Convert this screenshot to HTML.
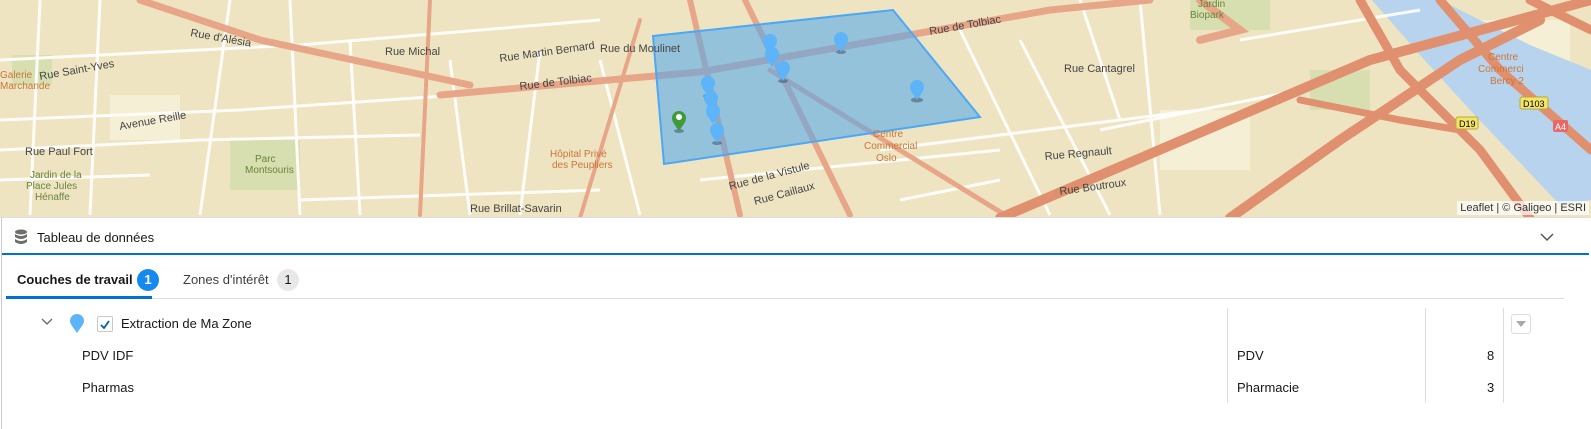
<!DOCTYPE html>
<html><head><meta charset="utf-8"><style>
*{margin:0;padding:0;box-sizing:border-box}
body{width:1591px;height:429px;overflow:hidden;background:#fff;font-family:"Liberation Sans",sans-serif;position:relative}
#map{position:absolute;left:0;top:0;width:1591px;height:218px;background:#eee4c2;overflow:hidden}
.attr{position:absolute;right:2px;top:201px;background:rgba(255,255,255,.7);font-size:11px;color:#333;padding:1px 3px}
#panel{position:absolute;left:1px;top:217px;width:1588px;height:212px;background:#fff;border-left:1px solid #ccc;border-top:1px solid #ddd}
.t{position:absolute;font-size:13px;color:#181818;white-space:nowrap}
.vl{position:absolute;top:308px;width:1px;height:95px;background:#ddd}
.badge{position:absolute;width:22px;height:22px;border-radius:11px;font-size:13px;text-align:center;line-height:22px;font-weight:bold}
</style></head><body>
<div id="map">
<svg width="1591" height="218" viewBox="0 0 1591 218">
<g fill="#f5efd8" opacity=".9">
<rect x="110" y="95" width="70" height="45"/><rect x="1160" y="110" width="90" height="60"/><rect x="1470" y="20" width="100" height="60"/>
</g>
<g fill="#d7dfb0"><rect x="12" y="55" width="40" height="30"/><rect x="230" y="140" width="70" height="50"/><rect x="1190" y="0" width="80" height="30"/><rect x="1310" y="70" width="60" height="40"/></g>
<path d="M1372 0 L1440 0 L1530 45 L1591 70 L1591 200 L1560 205 L1470 110 L1420 55 Z" fill="#b8d3ee"/>
<g stroke="#fff" stroke-width="3" fill="none" opacity=".9">
<path d="M0 60 L300 45 L600 20"/><path d="M0 120 L240 110 L460 95"/><path d="M0 150 L200 140 L420 135"/><path d="M40 0 L30 215"/><path d="M230 0 L200 215"/><path d="M350 40 L360 215"/><path d="M450 60 L470 215"/><path d="M540 50 L520 215"/><path d="M600 60 L640 215"/><path d="M960 30 L1050 215"/><path d="M1020 40 L1110 215"/><path d="M880 150 L1200 110"/><path d="M700 180 L1000 150"/><path d="M1100 130 L1300 90"/><path d="M300 200 L600 190"/><path d="M1080 0 L1120 120"/><path d="M1240 40 L1420 10"/>
<path d="M0 180 L150 175"/><path d="M100 0 L90 215"/><path d="M290 0 L300 215"/><path d="M1140 0 L1160 215"/><path d="M900 200 L1000 180"/>
</g>
<g stroke="#e8a689" fill="none" stroke-linecap="round">
<path d="M140 0 L260 40 L470 85" stroke-width="7"/>
<path d="M440 95 L700 72 L1050 10" stroke-width="7"/>
<path d="M1050 10 L1150 0" stroke-width="7"/>
<path d="M690 0 L740 215" stroke-width="6"/>
<path d="M745 0 L850 215" stroke-width="6"/>
<path d="M770 70 L1010 218" stroke-width="5"/>
<path d="M430 0 L420 215" stroke-width="4"/>
<path d="M640 20 L580 218" stroke-width="4"/>
<path d="M1200 0 L1240 30 L1200 40" stroke-width="8"/>
</g>
<g stroke="#e0906e" fill="none" stroke-linecap="round">
<path d="M1000 218 L1370 60 L1591 0" stroke-width="10"/>
<path d="M1230 218 L1340 140 L1460 60 L1540 20" stroke-width="10"/>
<path d="M1360 0 L1400 70 L1480 150 L1530 218" stroke-width="9"/>
<path d="M1440 0 L1500 70 L1591 150" stroke-width="9"/>
<path d="M1300 100 L1400 120 L1460 130" stroke-width="7"/>
<path d="M1530 0 L1591 30" stroke-width="9"/>
</g>
<polygon points="653,36 893,10 980,117 664,164" fill="#4da6f0" fill-opacity=".55" stroke="#4aa8f5" stroke-width="2"/>
<g fill="#3c4a5a" opacity=".5">
<ellipse cx="708" cy="96" rx="5" ry="2"/><ellipse cx="717" cy="143" rx="5" ry="2"/><ellipse cx="783" cy="81" rx="5" ry="2"/><ellipse cx="917" cy="100" rx="6" ry="2.5"/><ellipse cx="679" cy="131" rx="5" ry="2"/><ellipse cx="841" cy="52" rx="5" ry="2"/>
</g>
<g fill="#5db4f8">
<path d="M708 96 c-4-6-7-9-7-13 a7 7 0 0 1 14 0 c0 4-3 7-7 13z"/>
<path d="M711 111 c-4-6-7-9-7-13 a7 7 0 0 1 14 0 c0 4-3 7-7 13z"/>
<path d="M713 124 c-4-6-7-9-7-13 a7 7 0 0 1 14 0 c0 4-3 7-7 13z"/>
<path d="M717 143 c-4-6-7-9-7-13 a7 7 0 0 1 14 0 c0 4-3 7-7 13z"/>
<path d="M770 54 c-4-6-7-9-7-13 a7 7 0 0 1 14 0 c0 4-3 7-7 13z"/>
<path d="M772 67 c-4-6-7-9-7-13 a7 7 0 0 1 14 0 c0 4-3 7-7 13z"/>
<path d="M783 81 c-4-6-7-9-7-13 a7 7 0 0 1 14 0 c0 4-3 7-7 13z"/>
<path d="M841 52 c-4-6-7-9-7-13 a7 7 0 0 1 14 0 c0 4-3 7-7 13z"/>
<path d="M917 100 c-4-6-7-9-7-13 a7 7 0 0 1 14 0 c0 4-3 7-7 13z"/>
</g>
<path d="M679 131 c-4-6-7-9-7-13 a7 7 0 0 1 14 0 c0 4-3 7-7 13z" fill="#3e9b35"/>
<circle cx="679" cy="117" r="3" fill="#fff"/>
<g font-family="Liberation Sans" font-size="11" fill="#444">
<text x="190" y="36" transform="rotate(10 190 36)">Rue d'Alésia</text>
<text x="520" y="90" transform="rotate(-7 520 90)">Rue de Tolbiac</text>
<text x="930" y="35" transform="rotate(-10 930 35)">Rue de Tolbiac</text>
<text x="1064" y="72">Rue Cantagrel</text>
<text x="600" y="52">Rue du Moulinet</text>
<text x="500" y="62" transform="rotate(-8 500 62)">Rue Martin Bernard</text>
<text x="385" y="55">Rue Michal</text>
<text x="120" y="130" transform="rotate(-10 120 130)">Avenue Reille</text>
<text x="25" y="155">Rue Paul Fort</text>
<text x="40" y="80" transform="rotate(-10 40 80)">Rue Saint-Yves</text>
<text x="1045" y="160" transform="rotate(-5 1045 160)">Rue Regnault</text>
<text x="1060" y="195" transform="rotate(-8 1060 195)">Rue Boutroux</text>
<text x="730" y="190" transform="rotate(-15 730 190)">Rue de la Vistule</text>
<text x="755" y="205" transform="rotate(-15 755 205)">Rue Caillaux</text>
<text x="470" y="212">Rue Brillat-Savarin</text>
</g>
<g font-family="Liberation Sans" font-size="10" fill="#c9763a">
<text x="550" y="157">Hôpital Privé</text><text x="552" y="168">des Peupliers</text>
<text x="873" y="137">Centre</text><text x="864" y="149">Commercial</text><text x="876" y="161">Oslo</text>
<text x="1488" y="60">Centre</text><text x="1478" y="72">Commerci</text><text x="1490" y="84">Bercy 2</text>
<text x="0" y="78">Galerie</text><text x="0" y="89">Marchande</text>
</g>
<g font-family="Liberation Sans" font-size="10" fill="#67843a">
<text x="1198" y="7">Jardin</text><text x="1190" y="18">Biopark</text>
<text x="255" y="162">Parc</text><text x="245" y="173">Montsouris</text>
<text x="30" y="178">Jardin de la</text><text x="26" y="189">Place Jules</text><text x="35" y="200">Hénaffe</text>
</g>
<rect x="1520" y="97" width="28" height="12" rx="2" fill="#f3e56a" stroke="#b9a838"/><text x="1523" y="107" font-size="9" font-family="Liberation Sans">D103</text>
<rect x="1456" y="117" width="22" height="12" rx="2" fill="#f3e56a" stroke="#b9a838"/><text x="1459" y="127" font-size="9" font-family="Liberation Sans">D19</text>
<rect x="1553" y="120" width="15" height="12" rx="2" fill="#e86868"/><text x="1555" y="130" font-size="9" fill="#fff" font-family="Liberation Sans">A4</text>
</svg>
<div class="attr">Leaflet | © Galigeo | ESRI</div>
</div>
<div id="panel"></div>
<svg style="position:absolute;left:14px;top:229px" width="14" height="16" viewBox="0 0 14 16"><g fill="#706e6b"><ellipse cx="7" cy="3" rx="6" ry="2.5"/><path d="M1 5 q6 4 12 0 v3 q-6 4-12 0z"/><path d="M1 10 q6 4 12 0 v3 q-6 4-12 0z"/></g></svg>
<div class="t" style="left:37px;top:230px">Tableau de données</div>
<svg style="position:absolute;left:1540px;top:232px" width="14" height="10"><path d="M1 2 L7 8 L13 2" stroke="#555" stroke-width="1.5" fill="none"/></svg>
<div style="position:absolute;left:2px;top:253px;width:1587px;height:2px;background:#0070d2"></div>
<div class="t" style="left:17px;top:272px;font-weight:bold">Couches de travail</div>
<div class="badge" style="left:137px;top:269px;background:#1589ee;color:#fff">1</div>
<div class="t" style="left:183px;top:272px;color:#3e3e3c">Zones d'intérêt</div>
<div class="badge" style="left:277px;top:269px;background:#e8e8e8;color:#181818;font-weight:normal">1</div>
<div style="position:absolute;left:7px;top:298px;width:1557px;height:1px;background:#ddd"></div>
<div style="position:absolute;left:6px;top:296px;width:146px;height:3px;background:#0070d2"></div>
<svg style="position:absolute;left:41px;top:318px" width="12" height="8"><path d="M1 1 L6 6 L11 1" stroke="#666" stroke-width="1.3" fill="none"/></svg>
<svg style="position:absolute;left:70px;top:314px" width="14" height="20"><path d="M7 19 c-4-6-7-9-7-12 a7 7 0 0 1 14 0 c0 3-3 6-7 12z" fill="#5db4f8"/></svg>
<div style="position:absolute;left:97px;top:316px;width:16px;height:16px;border:1px solid #c9c9c9;border-radius:2px"></div>
<svg style="position:absolute;left:100px;top:320px" width="10" height="9"><path d="M1 5 L4 8 L9 1" stroke="#0b5cab" stroke-width="1.8" fill="none"/></svg>
<div class="t" style="left:121px;top:316px">Extraction de Ma Zone</div>
<div class="t" style="left:82px;top:348px">PDV IDF</div>
<div class="t" style="left:82px;top:380px">Pharmas</div>
<div class="vl" style="left:1227px"></div><div class="vl" style="left:1425px"></div><div class="vl" style="left:1503px"></div>
<div class="t" style="left:1237px;top:348px">PDV</div>
<div class="t" style="left:1237px;top:380px">Pharmacie</div>
<div class="t" style="left:1487px;top:348px">8</div>
<div class="t" style="left:1487px;top:380px">3</div>
<div style="position:absolute;left:1511px;top:314px;width:20px;height:20px;border:1px solid #ddd;border-radius:3px"></div>
<svg style="position:absolute;left:1516px;top:321px" width="10" height="6"><path d="M0 0 L10 0 L5 6z" fill="#aaa"/></svg>
</body></html>
